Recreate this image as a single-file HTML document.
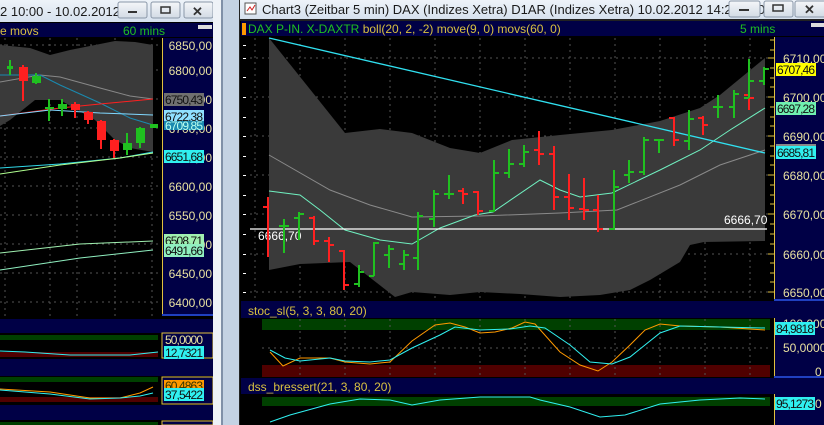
<!DOCTYPE html>
<html><head><meta charset="utf-8"><style>
html,body{margin:0;padding:0;width:824px;height:425px;overflow:hidden;background:#000}
svg{display:block}
text{font-family:"Liberation Sans",sans-serif}
</style></head><body>
<svg width="824" height="425" viewBox="0 0 824 425" xmlns="http://www.w3.org/2000/svg">
<defs>
<linearGradient id="tb" x1="0" y1="0" x2="0" y2="1"><stop offset="0" stop-color="#eef3f9"/><stop offset="1" stop-color="#d6e1ee"/></linearGradient>
<linearGradient id="btn" x1="0" y1="0" x2="0" y2="1"><stop offset="0" stop-color="#f4f6f9"/><stop offset="1" stop-color="#d3dbe5"/></linearGradient>
</defs>
<rect width="824" height="425" fill="#000"/>
<!-- LEFT WINDOW -->
<rect x="0" y="0" width="214" height="22" fill="url(#tb)"/>
<text x="0" y="16" font-size="13" fill="#1a1a1a">2 10:00 - 10.02.2012 ...</text>
<g stroke="#8a97a8" fill="url(#btn)"><rect x="118" y="2" width="29" height="16" rx="2"/><rect x="151" y="2" width="29" height="16" rx="2"/><rect x="184" y="2" width="29" height="16" rx="2"/></g>
<rect x="128" y="11" width="9" height="2" fill="#333"/>
<rect x="161" y="7" width="9" height="6" fill="none" stroke="#333" stroke-width="1.5"/>
<text x="192" y="16" font-size="13" font-weight="bold" fill="#333">✕</text>
<rect x="0" y="22" width="214" height="403" fill="#000"/>
<rect x="0" y="23" width="213" height="14" fill="#000046"/>
<text x="0" y="35" font-size="12" fill="#d8c040">e movs</text>
<text x="123" y="35" font-size="12" fill="#20c020">60 mins</text>
<rect x="198" y="25" width="14" height="4" fill="#ddd"/>
<g stroke="#555" stroke-dasharray="2,4" stroke-width="1">
<line x1="0" y1="45" x2="160" y2="45"/><line x1="0" y1="70" x2="160" y2="70"/><line x1="0" y1="99" x2="160" y2="99"/><line x1="0" y1="128" x2="160" y2="128"/><line x1="0" y1="157" x2="160" y2="157"/><line x1="0" y1="186" x2="160" y2="186"/><line x1="0" y1="215" x2="160" y2="215"/><line x1="0" y1="244" x2="160" y2="244"/><line x1="0" y1="273" x2="160" y2="273"/><line x1="0" y1="302" x2="160" y2="302"/>
<line x1="5" y1="38" x2="5" y2="316"/><line x1="50" y1="38" x2="50" y2="316"/><line x1="77" y1="38" x2="77" y2="316"/><line x1="115" y1="38" x2="115" y2="316"/><line x1="152" y1="38" x2="152" y2="316"/>
</g>
<path d="M0,45 L30,48 L50,55 L70,50 L115,41 L135,42 L153,45 L153,152 L130,148 L115,140 L95,120 L60,100 L35,100 L10,120 L0,126 Z" fill="#3a3a3a"/>
<polyline points="0,82 40,75 60,77 100,88 130,96 153,99" fill="none" stroke="#888"/>
<polyline points="0,75 40,75 60,85 100,103 130,118 153,125" fill="none" stroke="#1a8ab0"/>
<polyline points="0,116 60,108 100,104 153,99" fill="none" stroke="#ff2020"/>
<polyline points="0,116 50,110 100,113 153,115" fill="none" stroke="#80d8ff"/>
<polyline points="0,168 60,164 120,158 153,152" fill="none" stroke="#30d8e8"/>
<polyline points="0,174 60,165 120,158 153,153" fill="none" stroke="#b0ff90"/>
<polyline points="0,253 80,244 153,241" fill="none" stroke="#a0f0b0"/>
<polyline points="0,270 80,258 153,250" fill="none" stroke="#90f0c0"/>
<g stroke-width="2">
<line x1="10" y1="60" x2="10" y2="75" stroke="#20c020"/><rect x="7" y="66" width="6" height="3" fill="#20c020"/>
<line x1="23" y1="65" x2="23" y2="101" stroke="#ff2020"/><rect x="19" y="67" width="9" height="14" fill="#ff2020"/>
<line x1="36" y1="73" x2="36" y2="84" stroke="#20c020"/><rect x="32" y="76" width="9" height="7" fill="#20c020"/>
<line x1="49" y1="99" x2="49" y2="121" stroke="#20c020"/><rect x="45" y="107" width="9" height="2" fill="#20c020"/>
<line x1="62" y1="99" x2="62" y2="116" stroke="#20c020"/><rect x="58" y="104" width="9" height="5" fill="#20c020"/>
<line x1="75" y1="102" x2="75" y2="118" stroke="#ff2020"/><rect x="71" y="104" width="9" height="6" fill="#ff2020"/>
<line x1="88" y1="111" x2="88" y2="124" stroke="#ff2020"/><rect x="84" y="112" width="9" height="8" fill="#ff2020"/>
<line x1="101" y1="120" x2="101" y2="149" stroke="#ff2020"/><rect x="97" y="121" width="9" height="19" fill="#ff2020"/>
<line x1="114" y1="139" x2="114" y2="158" stroke="#ff2020"/><rect x="110" y="140" width="9" height="11" fill="#ff2020"/>
<line x1="127" y1="133" x2="127" y2="155" stroke="#20c020"/><rect x="123" y="143" width="9" height="7" fill="#20c020"/>
<line x1="140" y1="127" x2="140" y2="148" stroke="#20c020"/><rect x="136" y="128" width="9" height="15" fill="#20c020"/>
<rect x="150" y="124" width="8" height="4" fill="#20c020"/>
</g>
<rect x="162" y="38" width="51" height="278" fill="#000046"/>
<line x1="162.5" y1="38" x2="162.5" y2="316" stroke="#e0c040"/>
<line x1="162" y1="315" x2="213" y2="315" stroke="#2040c0" stroke-width="2"/>
<g font-size="12" fill="#e8e0a0" text-anchor="end">
<text x="212" y="50">6850,00</text><text x="212" y="75">6800,00</text><text x="212" y="104">6750,00</text><text x="212" y="133">6700,00</text><text x="212" y="162">6650,00</text><text x="212" y="191">6600,00</text><text x="212" y="220">6550,00</text><text x="212" y="249">6500,00</text><text x="212" y="278">6450,00</text><text x="212" y="307">6400,00</text>
</g>
<g font-size="12" fill="#111">
<rect x="164" y="93" width="40" height="13" fill="#707070"/><text x="165" y="104" textLength="38">6750,43</text>
<rect x="164" y="110" width="40" height="13" fill="#90e0ff"/><text x="165" y="121" textLength="38">6722,38</text>
<rect x="164" y="121" width="40" height="9" fill="#1a8ab0"/><text x="165" y="130" fill="#bfe" textLength="38">6709,85</text>
<rect x="164" y="150" width="40" height="13" fill="#30f0f0"/><text x="165" y="161" textLength="38">6651,68</text>
<rect x="164" y="234" width="40" height="13" fill="#a0f0b0"/><text x="165" y="245" textLength="38">6508,71</text>
<rect x="164" y="244" width="40" height="13" fill="#90f0c0"/><text x="165" y="255" textLength="38">6491,66</text>
</g>
<rect x="0" y="319" width="213" height="14" fill="#000046"/>
<rect x="0" y="335" width="158" height="5" fill="#004000"/>
<rect x="0" y="352" width="158" height="5" fill="#500000"/>
<polyline points="0,351 25,352 70,355 130,355 158,352" fill="none" stroke="#30f0f0"/>
<rect x="162" y="333" width="51" height="25" fill="#000046" stroke="#e0c040"/>
<text x="165" y="344" font-size="12" fill="#e8e0a0" textLength="38">50,0000</text>
<rect x="164" y="346" width="40" height="13" fill="#30f0f0"/><text x="165" y="357" font-size="12" fill="#111" textLength="38">12,7321</text>
<rect x="0" y="359" width="213" height="17" fill="#000046"/>
<rect x="0" y="377" width="158" height="5" fill="#004000"/>
<rect x="0" y="397" width="158" height="5" fill="#500000"/>
<polyline points="0,389 50,392 90,398 120,398 140,393 153,387" fill="none" stroke="#ff9900"/>
<polyline points="0,390 50,394 90,399 120,398 140,396 153,393" fill="none" stroke="#30f0f0"/>
<rect x="162" y="377" width="51" height="27" fill="#000046" stroke="#e0c040"/>
<rect x="164" y="380" width="40" height="10" fill="#ff9900"/><text x="165" y="390" font-size="12" fill="#330" textLength="38">60,4863</text>
<rect x="164" y="388" width="40" height="13" fill="#30f0f0"/><text x="165" y="399" font-size="12" fill="#111" textLength="38">37,5422</text>
<rect x="0" y="405" width="213" height="15" fill="#000046"/>
<rect x="0" y="422" width="158" height="3" fill="#004000"/>
<rect x="162" y="421" width="51" height="4" fill="#000046" stroke="#e0c040"/>
<!-- separator -->
<rect x="213" y="0" width="9" height="425" fill="#eef2f7"/>
<rect x="221" y="0" width="2" height="425" fill="#8090a8"/>
<rect x="223" y="0" width="16" height="425" fill="#c4d2e3"/>
<rect x="239" y="0" width="1" height="425" fill="#222"/>
<!-- RIGHT WINDOW title -->
<rect x="240" y="0" width="584" height="19" fill="url(#tb)"/>
<rect x="245" y="3" width="11" height="11" fill="#fff" stroke="#555"/><path d="M247,11 L250,7 L252,10 L255,5" stroke="#d02020" fill="none"/>
<text x="262" y="14" font-size="13" fill="#1a1a1a">Chart3 (Zeitbar 5 min)  DAX (Indizes Xetra) D1AR (Indizes Xetra) 10.02.2012 14:20 - 10.02...</text>
<g stroke="#8a97a8" fill="url(#btn)"><rect x="729" y="1" width="31" height="16" rx="2"/><rect x="764" y="1" width="29" height="16" rx="2"/><rect x="795" y="1" width="31" height="16" rx="2"/></g>
<rect x="739" y="9" width="10" height="2" fill="#333"/>
<rect x="773" y="5" width="10" height="6" fill="none" stroke="#333" stroke-width="1.5"/>
<text x="804" y="14" font-size="13" font-weight="bold" fill="#333">✕</text>
<rect x="240" y="19" width="584" height="2" fill="#222"/>
<rect x="241" y="21" width="583" height="15" fill="#000046"/>
<rect x="242" y="23" width="4" height="12" fill="#ff9900"/>
<text x="248" y="33" font-size="12"><tspan fill="#20c020">DAX P-IN. X-DAXTR </tspan><tspan fill="#d8c040">boll(20, 2, -2) move(9, 0) movs(60, 0)</tspan></text>
<text x="740" y="33" font-size="12" fill="#20c020">5 mins</text>
<rect x="811" y="23" width="13" height="4" fill="#ddd"/>
<g stroke="#555" stroke-dasharray="2,4">
<line x1="250" y1="58" x2="770" y2="58"/><line x1="250" y1="97" x2="770" y2="97"/><line x1="250" y1="136" x2="770" y2="136"/><line x1="250" y1="175" x2="770" y2="175"/><line x1="250" y1="214" x2="770" y2="214"/><line x1="250" y1="254" x2="770" y2="254"/><line x1="250" y1="292" x2="770" y2="292"/>
<line x1="255" y1="38" x2="255" y2="300"/><line x1="300" y1="38" x2="300" y2="300"/><line x1="345" y1="38" x2="345" y2="300"/><line x1="390" y1="38" x2="390" y2="300"/><line x1="435" y1="38" x2="435" y2="300"/><line x1="480" y1="38" x2="480" y2="300"/><line x1="525" y1="38" x2="525" y2="300"/><line x1="570" y1="38" x2="570" y2="300"/><line x1="615" y1="38" x2="615" y2="300"/><line x1="660" y1="38" x2="660" y2="300"/><line x1="705" y1="38" x2="705" y2="300"/><line x1="750" y1="38" x2="750" y2="300"/>
</g>
<g fill="#fff"><rect x="243" y="45" width="3" height="1"/><rect x="243" y="58" width="3" height="1"/><rect x="243" y="77" width="3" height="1"/><rect x="243" y="97" width="3" height="1"/><rect x="243" y="117" width="3" height="1"/><rect x="243" y="136" width="3" height="1"/><rect x="243" y="156" width="3" height="1"/><rect x="243" y="175" width="3" height="1"/><rect x="243" y="195" width="3" height="1"/><rect x="243" y="214" width="3" height="1"/><rect x="243" y="234" width="3" height="1"/><rect x="243" y="254" width="3" height="1"/><rect x="243" y="273" width="3" height="1"/><rect x="243" y="292" width="3" height="1"/></g>
<path d="M269,38 L345,133 L380,129 L412,133 L450,148 L480,153 L512,140 L560,135 L612,130 L660,121 L700,108 L720,95 L765,58 L765,241 L704,242 L690,245 L680,262 L650,280 L630,290 L600,295 L560,297 L520,294 L480,292 L450,295 L412,292 L395,297 L350,262 L300,264 L269,270 Z" fill="#3a3a3a"/>
<polyline points="269,155 330,190 370,205 412,217 480,216 560,213 617,210 680,185 720,165 765,150" fill="none" stroke="#8a8a8a"/>
<polyline points="269,191 300,195 320,210 345,230 380,240 412,244 440,228 475,215 493,212 540,180 560,190 580,197 612,193 660,170 700,150 730,130 765,108" fill="none" stroke="#70f0c0"/>
<line x1="269" y1="38" x2="765" y2="153" stroke="#30e0f0" stroke-width="1.3"/>
<line x1="250" y1="229" x2="767" y2="229" stroke="#fff" stroke-width="1.3"/>
<text x="258" y="240" font-size="12" fill="#fff">6666,70</text>
<text x="724" y="224" font-size="12" fill="#fff">6666,70</text>
<g stroke-width="2" fill="none">
<path d="M268,197 V257 M268,207 h-5" stroke="#ff2020"/>
<path d="M284,219 V253 M284,226 h-5 M284,226 h5" stroke="#20c020"/>
<path d="M299,212 V240 M299,218 h-5 M299,214 h5" stroke="#20c020"/>
<path d="M314,216 V245 M314,218 h-5 M314,241 h5" stroke="#ff2020"/>
<path d="M329,237 V262 M329,241 h-5 M329,245 h5" stroke="#ff2020"/>
<path d="M344,250 V290 M344,251 h-5 M344,285 h5" stroke="#ff2020"/>
<path d="M359,265 V287 M359,284 h-5 M359,272 h5" stroke="#20c020"/>
<path d="M374,242 V276 M374,276 h-5 M374,243 h5" stroke="#20c020"/>
<path d="M389,245 V268 M389,255 h-5 M389,249 h5" stroke="#20c020"/>
<path d="M404,250 V270 M404,264 h-5 M404,255 h5" stroke="#20c020"/>
<path d="M418,212 V270 M418,258 h-5 M418,216 h5" stroke="#20c020"/>
<path d="M434,190 V227 M434,219 h-5 M434,194 h5" stroke="#20c020"/>
<path d="M449,175 V199 M449,194 h-5 M449,194 h5" stroke="#20c020"/>
<path d="M463,188 V204 M463,191 h-5 M463,194 h5" stroke="#ff2020"/>
<path d="M478,191 V215 M478,192 h-5 M478,211 h5" stroke="#ff2020"/>
<path d="M494,160 V212 M494,211 h-5 M494,173 h5" stroke="#20c020"/>
<path d="M509,149 V178 M509,173 h-5 M509,164 h5" stroke="#20c020"/>
<path d="M524,145 V167 M524,164 h-5 M524,152 h5" stroke="#20c020"/>
<path d="M539,131 V165 M539,150 h-5 M539,154 h5" stroke="#ff2020"/>
<path d="M554,146 V210 M554,154 h-5 M554,197 h5" stroke="#ff2020"/>
<path d="M569,174 V220 M569,197 h-5 M569,208 h5" stroke="#ff2020"/>
<path d="M584,178 V220 M584,209 h-5 M584,210 h5" stroke="#ff2020"/>
<path d="M598,195 V232 M598,210 h-5 M598,229 h5" stroke="#ff2020"/>
<path d="M614,170 V230 M614,229 h-5 M614,187 h5" stroke="#20c020"/>
<path d="M629,160 V183 M629,175 h-5 M629,172 h5" stroke="#20c020"/>
<path d="M644,137 V175 M644,172 h-5 M644,140 h5" stroke="#20c020"/>
<path d="M659,140 V153 M659,140 h-5 M659,140 h5" stroke="#20c020"/>
<path d="M674,117 V146 M674,118 h-5 M674,140 h5" stroke="#ff2020"/>
<path d="M689,110 V150 M689,141 h-5 M689,119 h5" stroke="#20c020"/>
<path d="M703,116 V135 M703,118 h-5 M703,125 h5" stroke="#ff2020"/>
<path d="M718,95 V118 M718,107 h-5 M718,107 h5" stroke="#20c020"/>
<path d="M734,90 V118 M734,107 h-5 M734,94 h5" stroke="#20c020"/>
<path d="M749,94 V110 M749,95 h-5 M749,98 h5" stroke="#ff2020"/>
<path d="M749,59 V98 M749,98 h-5 M749,81 h5" stroke="#20c020"/>
<path d="M764,67 V85 M764,81 h-5 M764,69 h5" stroke="#20c020"/>
</g>
<rect x="774" y="37" width="50" height="263" fill="#000046"/>
<line x1="774.5" y1="37" x2="774.5" y2="300" stroke="#e0c040"/>
<g stroke="#e0c040"><line x1="770" y1="40" x2="774" y2="40"/><line x1="770" y1="50" x2="774" y2="50"/><line x1="768" y1="58" x2="774" y2="58"/><line x1="770" y1="68" x2="774" y2="68"/><line x1="770" y1="78" x2="774" y2="78"/><line x1="770" y1="87" x2="774" y2="87"/><line x1="768" y1="97" x2="774" y2="97"/><line x1="770" y1="107" x2="774" y2="107"/><line x1="770" y1="117" x2="774" y2="117"/><line x1="770" y1="126" x2="774" y2="126"/><line x1="768" y1="136" x2="774" y2="136"/><line x1="770" y1="146" x2="774" y2="146"/><line x1="770" y1="156" x2="774" y2="156"/><line x1="770" y1="165" x2="774" y2="165"/><line x1="768" y1="175" x2="774" y2="175"/><line x1="770" y1="185" x2="774" y2="185"/><line x1="770" y1="195" x2="774" y2="195"/><line x1="770" y1="204" x2="774" y2="204"/><line x1="768" y1="214" x2="774" y2="214"/><line x1="770" y1="224" x2="774" y2="224"/><line x1="770" y1="234" x2="774" y2="234"/><line x1="770" y1="244" x2="774" y2="244"/><line x1="768" y1="254" x2="774" y2="254"/><line x1="770" y1="263" x2="774" y2="263"/><line x1="770" y1="273" x2="774" y2="273"/><line x1="770" y1="282" x2="774" y2="282"/><line x1="768" y1="292" x2="774" y2="292"/></g>
<line x1="774" y1="300" x2="824" y2="300" stroke="#2040c0" stroke-width="2"/>
<g font-size="12" fill="#e8e0a0">
<text x="783" y="63">6710,00</text><text x="783" y="102">6700,00</text><text x="783" y="141">6690,00</text><text x="783" y="180">6680,00</text><text x="783" y="219">6670,00</text><text x="783" y="259">6660,00</text><text x="783" y="297">6650,00</text>
</g>
<g font-size="12" fill="#111">
<rect x="776" y="63" width="40" height="13" fill="#ffff00"/><text x="777" y="74" textLength="38">6707,46</text>
<rect x="776" y="102" width="40" height="13" fill="#70f0b0"/><text x="777" y="113" textLength="38">6697,28</text>
<rect x="776" y="144" width="40" height="4" fill="#888"/>
<rect x="776" y="146" width="40" height="13" fill="#30f0f0"/><text x="777" y="157" textLength="38">6685,81</text>
</g>
<!-- stoc -->
<rect x="241" y="301" width="583" height="17" fill="#000046"/>
<text x="248" y="315" font-size="12" fill="#d8c040">stoc_sl(5, 3, 3, 80, 20)</text>
<rect x="262" y="319" width="508" height="11" fill="#004000"/>
<rect x="262" y="365" width="508" height="12" fill="#500000"/>
<g stroke="#555" stroke-dasharray="2,4"><line x1="262" y1="348" x2="770" y2="348"/><line x1="300" y1="319" x2="300" y2="377"/><line x1="345" y1="319" x2="345" y2="377"/><line x1="390" y1="319" x2="390" y2="377"/><line x1="435" y1="319" x2="435" y2="377"/><line x1="480" y1="319" x2="480" y2="377"/><line x1="525" y1="319" x2="525" y2="377"/><line x1="570" y1="319" x2="570" y2="377"/><line x1="615" y1="319" x2="615" y2="377"/><line x1="660" y1="319" x2="660" y2="377"/><line x1="705" y1="319" x2="705" y2="377"/><line x1="750" y1="319" x2="750" y2="377"/></g>
<polyline points="270,352 283,366 300,358 330,358 345,362 370,364 390,362 412,341 435,325 450,323 465,327 480,333 495,332 512,328 525,322 535,324 560,352 580,365 598,371 612,362 630,345 645,330 660,324 680,326 720,327 765,330" fill="none" stroke="#ff9900"/>
<polyline points="270,350 285,358 300,361 330,358 345,361 370,362 390,360 412,348 440,335 455,327 480,330 510,329 530,326 545,328 570,345 590,362 612,364 630,357 660,333 680,326 720,327 765,328" fill="none" stroke="#30f0f0"/>
<rect x="774" y="318" width="50" height="59" fill="#000046"/>
<line x1="774.5" y1="318" x2="774.5" y2="377" stroke="#e0c040"/>
<line x1="774" y1="377" x2="824" y2="377" stroke="#2040c0" stroke-width="2"/>
<text x="783" y="352" font-size="12" fill="#e8e0a0">50,0000</text>
<text x="815" y="376" font-size="12" fill="#e8e0a0">0</text>
<text x="783" y="328" font-size="12" fill="#e8e0a0">100,0000</text>
<rect x="775" y="322" width="40" height="13" fill="#30f0f0"/><text x="776" y="333" font-size="12" fill="#111" textLength="38">84,9818</text>
<!-- dss -->
<rect x="241" y="378" width="583" height="16" fill="#000046"/>
<text x="248" y="391" font-size="12" fill="#d8c040">dss_bressert(21, 3, 80, 20)</text>
<rect x="262" y="397" width="508" height="9" fill="#004000"/>
<polyline points="270,422 290,415 330,404 360,399 390,400 412,405 440,400 480,397 530,397 540,400 570,407 600,417 625,415 660,404 700,400 740,398 765,399" fill="none" stroke="#30f0f0"/>
<rect x="774" y="394" width="50" height="31" fill="#000046"/>
<line x1="774.5" y1="394" x2="774.5" y2="425" stroke="#e0c040"/>
<text x="815" y="408" font-size="12" fill="#e8e0a0">0</text>
<rect x="775" y="397" width="40" height="13" fill="#30f0f0"/><text x="776" y="408" font-size="12" fill="#111" textLength="38">95,1273</text>
</svg>
</body></html>
